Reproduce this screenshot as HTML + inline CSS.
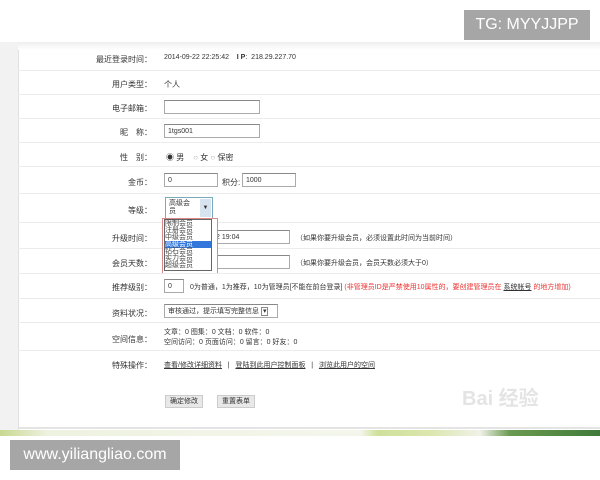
<!DOCTYPE html>
<html><head><meta charset="utf-8"><style>
body{margin:0;width:600px;height:480px;position:relative;overflow:hidden;background:#fff;font-family:"Liberation Sans","Noto Sans CJK SC",sans-serif;font-size:8px;color:#333}
.a{position:absolute;white-space:nowrap}
.l{position:absolute;right:448px;text-align:right;white-space:nowrap;font-size:8px;color:#333}
.hr{position:absolute;left:18px;right:0;height:1px;background:#ececec}
.in{position:absolute;border:1px solid #aaa;border-top-color:#888;background:#fff;height:14px;font-size:7px;line-height:14px;padding-left:3px;box-sizing:border-box}
.red{color:#e33}
u{color:#333}
</style></head><body>
<div class="a" style="left:0;top:42px;width:18px;height:388px;background:#f2f2f2;border-right:1px solid #e0e0e0"></div>
<div class="a" style="left:18px;top:42px;right:0;height:8px;background:linear-gradient(#eee,#fff)"></div>
<div class="a" style="left:464px;top:10px;width:126px;height:30px;background:#a6a6a6;color:#fff;font-size:16px;line-height:30px;text-align:center">TG: MYYJJPP</div>

<div class="l" style="top:54px">最近登录时间：</div><div class="a" style="left:164px;top:54px;font-size:7px">2014-09-22 22:25:42 &nbsp;&nbsp;&nbsp;<b>I P</b>: &nbsp;218.29.227.70</div>
<div class="hr" style="top:70px"></div>
<div class="l" style="top:79px">用户类型：</div><div class="a" style="left:164px;top:79px">个人</div>
<div class="hr" style="top:94px"></div>
<div class="in" style="left:164px;top:100px;width:96px"></div><div class="l" style="top:103px">电子邮箱：</div>
<div class="hr" style="top:118px"></div>
<div class="l" style="top:127px">昵　称：</div><div class="in" style="left:164px;top:124px;width:96px">1tgs001</div>
<div class="hr" style="top:142px"></div>
<div class="l" style="top:152px">性　别：</div><div class="a" style="left:166px;top:152px">◉ 男 &nbsp;&nbsp; <span style="color:#aaa">○</span> 女 <span style="color:#aaa">○</span> 保密</div>
<div class="hr" style="top:166px"></div>
<div class="l" style="top:177px">金币：</div><div class="in" style="left:164px;top:173px;width:54px">0</div><div class="a" style="left:222px;top:177px">积分:</div><div class="in" style="left:242px;top:173px;width:54px">1000</div>
<div class="hr" style="top:193px"></div>
<div class="l" style="top:205px">等级：</div>
<div class="a" style="left:165px;top:197px;width:48px;height:22px;border:1px solid #7ab;background:#fff;font-size:7px;line-height:8px;padding:2px 0 0 3px;box-sizing:border-box">高级会<br>员</div>
<div class="a" style="left:200px;top:199px;width:11px;height:18px;background:#d7e3ef;font-size:6px;text-align:center;line-height:18px">▼</div>
<div class="hr" style="top:222px"></div>
<div class="l" style="top:233px">升级时间：</div><div class="in" style="left:212px;top:230px;width:78px">2 19:04</div><div class="a" style="left:296px;top:233px;font-size:7px">（如果你要升级会员，必须设置此时间为当前时间）</div>
<div class="hr" style="top:248px"></div>
<div class="l" style="top:258px">会员天数：</div><div class="in" style="left:212px;top:255px;width:78px"></div><div class="a" style="left:296px;top:258px;font-size:7px">（如果你要升级会员，会员天数必须大于0）</div>
<div class="a" style="left:162px;top:218px;width:54px;height:54px;border:1px solid #d88;background:#fff"></div>
<div class="a" style="left:164px;top:219px;width:46px;height:50px;font-size:7px;line-height:7px;border:1px solid #666;background:#fff;color:#444">限制会员<br>注册会员<br>中级会员<br><span style="background:#3377dd;color:#fff;display:block">高级会员</span>钻石会员<br>实力会员<br>超级会员</div>
<div class="hr" style="top:273px"></div>
<div class="l" style="top:282px">推荐级别：</div><div class="in" style="left:164px;top:279px;width:20px">0</div><div class="a" style="left:190px;top:282px;font-size:7px">0为普通，1为推荐，10为管理员[不能在前台登录] <span class="red">(非管理员ID是严禁使用10属性的，要创建管理员在 <u>系统帐号</u> 的地方增加)</span></div>
<div class="hr" style="top:298px"></div>
<div class="l" style="top:308px">资料状况：</div><div class="in" style="left:164px;top:304px;width:114px">审核通过，提示填写完整信息 <span style="border:1px solid #888;padding:0 1px">▾</span></div>
<div class="hr" style="top:322px"></div>
<div class="l" style="top:334px">空间信息：</div><div class="a" style="left:164px;top:328px;font-size:7px;line-height:10px">文章：0 图集：0 文档：0 软件：0<br>空间访问：0 页面访问：0 留言：0 好友：0</div>
<div class="hr" style="top:350px"></div>
<div class="l" style="top:360px">特殊操作：</div><div class="a" style="left:164px;top:360px;font-size:7px"><u>查看/修改详细资料</u> &nbsp;&nbsp;| &nbsp;&nbsp;<u>登陆到此用户控制面板</u> &nbsp;&nbsp;| &nbsp;&nbsp;<u>浏览此用户的空间</u></div>
<div class="a" style="left:165px;top:395px;width:36px;height:11px;background:#e8e8e8;border:1px solid #ccc;font-size:7px;line-height:11px;text-align:center">确定修改</div>
<div class="a" style="left:217px;top:395px;width:36px;height:11px;background:#e8e8e8;border:1px solid #ccc;font-size:7px;line-height:11px;text-align:center">重置表单</div>
<div class="a" style="left:462px;top:382px;color:#e4e4e4;font-size:20px;font-weight:bold">Bai 经验</div>
<div class="a" style="left:18px;top:427px;right:0;height:2px;background:#e4e4e4"></div>
<div class="a" style="left:0;top:430px;width:600px;height:6px;background:linear-gradient(90deg,#c8d890 0,#eef2e0 8%,#f4f6ec 60%,#cfe09a 63%,#dbe7b0 72%,#f0f2e8 80%,#6a9a50 85%,#3f7a3a 100%)"></div>
<div class="a" style="left:10px;top:440px;width:170px;height:30px;background:#a6a6a6;color:#fff;font-size:16px;line-height:30px;text-align:center">www.yiliangliao.com</div>
</body></html>
